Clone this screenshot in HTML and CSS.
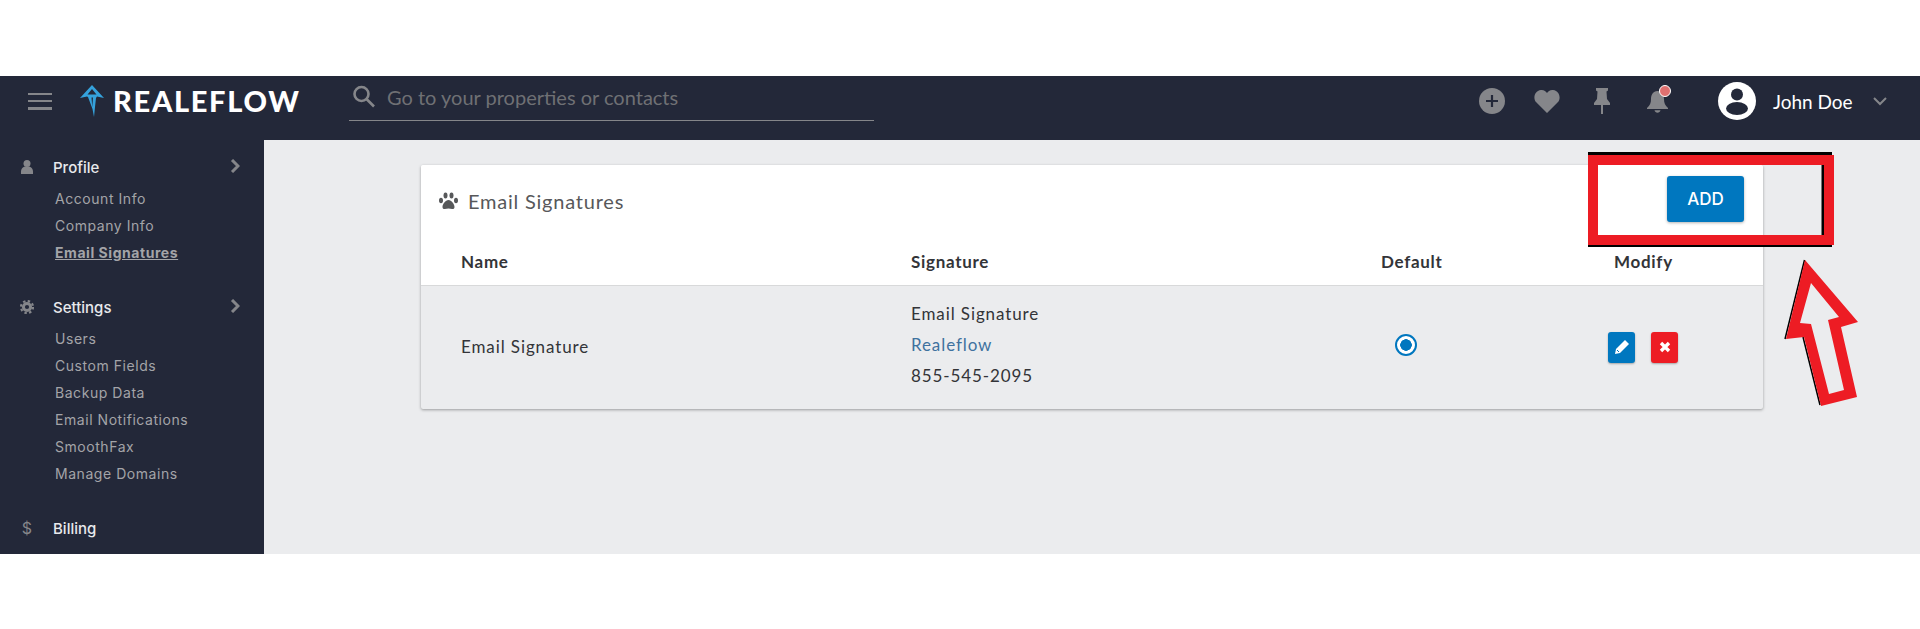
FILE: index.html
```html
<!DOCTYPE html>
<html lang="en">
  <head>
    <meta charset="UTF-8" />
    <title>Email Signatures</title>
    <link rel="stylesheet" href="styles.css">
  </head>
  <body>
    <div class="app">
      <header class="topbar">
        <button class="burger"><span></span><span></span><span></span></button>
        <div class="logo">
          <svg class="logo_mark" width="24" height="32" viewBox="0 0 24 32">
            <path d="M12 0L24 13L17 11.500L16 13L15 22L14 32L12.500 24L8 12L7 11.500L0 13Z" fill="#35a2dc" />
            <path d="M12 4L16.500 9.500H7.500Z" fill="#232839" />
            <path d="M11.500 12.500H13L12.300 22Z" fill="#232839" />
          </svg>
          <span class="logo_text">REALEFLOW</span>
        </div>
        <div class="search">
          <svg width="24" height="24" viewBox="0 0 24 24" fill="none" stroke="#85868a" stroke-width="2.6">
            <circle cx="9.500" cy="9" r="7" />
            <path d="M14.500 14L22 21.500" />
          </svg>
          <span class="search_text">Go to your properties or contacts</span>
        </div>
        <div class="top_icons">
          <svg class="t_plus" width="26" height="26" viewBox="0 0 26 26">
            <circle cx="13" cy="13" r="13" fill="#85868a" />
            <path d="M13 7V19M7 13H19" stroke="#232839" stroke-width="2.200" />
          </svg>
          <svg class="t_heart" width="26" height="24" viewBox="0 0 26 24">
            <path d="M13 24L2 13C-1 9.500 0 2 7 1C10 .7 12 2.500 13 4C14 2.500 16 .7 19 1C26 2 27 9.500 24 13Z" fill="#85868a" />
          </svg>
          <svg class="t_pin" width="16" height="26" viewBox="0 0 16 26">
            <path d="M2 0H14V2.500L12.500 3.500L13 11L16 15V17H9V26H7V17H0V15L3 11L3.500 3.500L2 2.500Z" fill="#85868a" />
          </svg>
          <div class="t_bell">
            <svg width="21" height="24" viewBox="0 0 21 24">
              <path d="M10.500 2C15 2 17 6 17 10C17 14 18 16 21 19V20H0V19C3 16 4 14 4 10C4 6 6 2 10.500 2Z M7.500 21.200H13.500C13 24.500 8 24.500 7.500 21.200Z" fill="#85868a" />
            </svg>
            <span class="bell_dot"></span>
          </div>
        </div>
        <div class="user">
          <svg width="38" height="38" viewBox="0 0 38 38">
            <circle cx="19" cy="19" r="19" fill="#fff" />
            <circle cx="19" cy="12.500" r="6" fill="#232839" />
            <ellipse cx="19" cy="26.500" rx="11" ry="6.500" fill="#232839" />
          </svg>
          <span class="user_name">John Doe</span>
          <svg width="14" height="9" viewBox="0 0 14 9" fill="none" stroke="#85868a" stroke-width="2">
            <path d="M1 1L7 7L13 1" />
          </svg>
        </div>
      </header>

      <div class="main">
        <nav class="sidebar">
          <div class="nav_group">
            <div class="nav_head">
              <svg class="nav_icon" width="14" height="14" viewBox="0 0 14 14">
                <circle cx="7" cy="3.500" r="3.500" fill="#85868a" />
                <path d="M1 14C.5 8 3 6.500 7 6.500S13.500 8 13 14Z" fill="#85868a" />
              </svg>
              <span class="nav_title">Profile</span>
              <svg class="nav_chev" width="10" height="14" viewBox="0 0 10 14" fill="none" stroke="#85868a" stroke-width="3">
                <path d="M2 1L8 7L2 13" />
              </svg>
            </div>
            <a class="nav_link">Account Info</a>
            <a class="nav_link">Company Info</a>
            <a class="nav_link nav_active">Email Signatures</a>
          </div>
          <div class="nav_group">
            <div class="nav_head">
              <svg class="nav_icon" width="14" height="14" viewBox="0 0 14 14" fill="none" stroke="#85868a">
                <circle cx="7" cy="7" r="3.600" stroke-width="3" />
                <circle cx="7" cy="7" r="6" stroke-width="2.200" stroke-dasharray="2.400 2.312" />
              </svg>
              <span class="nav_title">Settings</span>
              <svg class="nav_chev" width="10" height="14" viewBox="0 0 10 14" fill="none" stroke="#85868a" stroke-width="3">
                <path d="M2 1L8 7L2 13" />
              </svg>
            </div>
            <a class="nav_link">Users</a>
            <a class="nav_link">Custom Fields</a>
            <a class="nav_link">Backup Data</a>
            <a class="nav_link">Email Notifications</a>
            <a class="nav_link">SmoothFax</a>
            <a class="nav_link">Manage Domains</a>
          </div>
          <div class="nav_group">
            <div class="nav_head">
              <span class="nav_icon nav_dollar">$</span>
              <span class="nav_title">Billing</span>
            </div>
          </div>
        </nav>

        <section class="content">
          <div class="card">
            <div class="card_head">
              <svg class="paw" width="19" height="18" viewBox="0 0 19 18" fill="#57585a">
                <ellipse cx="6.500" cy="3.500" rx="2" ry="3" />
                <ellipse cx="12.500" cy="3.500" rx="2" ry="3" />
                <ellipse cx="2" cy="8.500" rx="2" ry="2.800" />
                <ellipse cx="17" cy="8.500" rx="2" ry="2.800" />
                <path d="M9.500 8C12.500 8 15.500 12 15.500 15C15.500 18 12 17 9.500 16.500C7 17 3.500 18 3.500 15C3.500 12 6.500 8 9.500 8Z" />
              </svg>
              <h2 class="card_title">Email Signatures</h2>
              <button class="add_button">ADD</button>
            </div>
            <div class="table_row table_head">
              <div>Name</div>
              <div>Signature</div>
              <div>Default</div>
              <div>Modify</div>
            </div>
            <div class="table_row table_body">
              <div class="row_name">Email Signature</div>
              <div class="sig">
                <div>Email Signature</div>
                <a class="sig_link">Realeflow</a>
                <div>855-545-2095</div>
              </div>
              <div><span class="radio"></span></div>
              <div class="actions">
                <button class="icon_btn edit_btn">
                  <svg width="14" height="14" viewBox="0 0 14 14">
                    <path d="M10 0L14 4L5 13L0 14L1 9Z" fill="#fff" />
                    <path d="M2 10L4 12" stroke="#0077bf" stroke-width="1" />
                  </svg>
                </button>
                <button class="icon_btn del_btn">
                  <svg width="12" height="12" viewBox="0 0 12 12">
                    <path d="M2 2L10 10M10 2L2 10" stroke="#fff" stroke-width="3.400" />
                  </svg>
                </button>
              </div>
            </div>
          </div>
        </section>
      </div>
    </div>

    <!-- red callout drawn on top of the screenshot -->
    <svg class="callout" width="1920" height="629" viewBox="0 0 1920 629">
      <path d="M1588 153.500H1832M1588 245.500H1832M1823 155V240" fill="none" stroke="#000" stroke-width="3" />
      <rect x="1593" y="160" width="236" height="80" fill="none" stroke="#ed1c24" stroke-width="10" />
      <path d="M1804.500 260L1785 339M1803 337L1820 405" fill="none" stroke="#000" stroke-width="1.500" />
      <path fill-rule="evenodd" fill="#ed1c24" d="M1805 260L1858 322L1841 327L1857 397L1821 406L1804 337L1786 339Z M1811 283L1800 323L1811 324L1829 394L1844 390L1828 320L1839 317Z" />
    </svg>
  </body>
</html>
```

FILE: styles.css
```css
body {
  margin: 0;
  padding-top: 76px;
  background-color: white;
  font-family: "Inter", sans-serif;
  height: 629px;
  box-sizing: border-box;
  overflow: hidden;
  position: relative;
}
.app {
  height: 478px;
  display: flex;
  flex-direction: column;
  background-color: #ebecee;
}
.topbar {
  height: 64px;
  box-sizing: border-box;
  padding-bottom: 14px;
  background-color: #232839;
  display: flex;
  align-items: center;
  flex-shrink: 0;
}
.burger {
  width: 24px;
  height: 17px;
  margin-left: 28px;
  padding: 0;
  border: 0;
  background: none;
  display: flex;
  flex-direction: column;
  justify-content: space-between;
}
.burger span {
  display: block;
  height: 2.5px;
  background-color: #85868a;
}
.logo {
  display: flex;
  align-items: center;
  margin-left: 28px;
  width: 269px;
}
.logo_text {
  margin-left: 9px;
  color: white;
  font-family: "Lato", sans-serif;
  font-weight: 900;
  font-size: 29px;
  letter-spacing: 1.7px;
  line-height: 32px;
}
.search {
  width: 525px;
  height: 36px;
  align-self: flex-start;
  margin-top: 9px;
  box-sizing: border-box;
  border-bottom: 1px solid #85868a;
  display: flex;
  align-items: flex-start;
  padding: 0 0 0 3px;
  gap: 11px;
}
.search_text {
  color: #6f7074;
  font-family: "Lato", sans-serif;
  font-size: 20px;
  line-height: 24px;
}
.top_icons {
  margin-left: 605px;
  display: flex;
  align-items: center;
}
.t_heart {
  margin-left: 29px;
}
.t_pin {
  margin-left: 34px;
}
.t_bell {
  margin-left: 37px;
  position: relative;
  height: 24px;
}
.bell_dot {
  position: absolute;
  top: -4px;
  left: 12px;
  width: 10px;
  height: 10px;
  border-radius: 50%;
  background-color: #e07070;
  border: 1.5px solid white;
}
.user {
  margin-left: 50px;
  display: flex;
  align-items: center;
}
.user_name {
  margin-left: 17px;
  margin-right: 20px;
  color: white;
  font-family: "Lato", sans-serif;
  font-size: 19px;
}
.main {
  flex: 1;
  display: flex;
  min-height: 0;
}
.sidebar {
  width: 264px;
  background-color: #232839;
  flex-shrink: 0;
  padding-top: 13px;
  box-sizing: border-box;
  overflow: hidden;
}
.nav_group {
  margin-bottom: 27px;
}
.nav_head {
  height: 28px;
  margin-bottom: 4px;
  display: flex;
  align-items: center;
  position: relative;
  padding-left: 20px;
}
.nav_icon {
  width: 14px;
  flex-shrink: 0;
}
.nav_dollar {
  color: #85868a;
  font-size: 16px;
  text-align: center;
}
.nav_title {
  margin-left: 19px;
  color: #e8e9ec;
  font-size: 15px;
  font-weight: 500;
}
.nav_chev {
  position: absolute;
  left: 230px;
  top: 6px;
}
.nav_link {
  display: block;
  height: 27px;
  line-height: 27px;
  margin-left: 55px;
  color: #a3a4a8;
  font-size: 14px;
  letter-spacing: 0.55px;
}
.nav_active {
  font-weight: 700;
  text-decoration: underline;
}
.content {
  flex: 1;
  padding: 25px 157px 0 157px;
}
.card {
  width: 1342px;
  box-shadow: 0 1px 3px rgba(0, 0, 0, 0.35);
  border-radius: 2px;
  background-color: #ebecee;
}
.card_head {
  height: 72px;
  background-color: white;
  display: flex;
  align-items: center;
  padding-left: 18px;
  border-radius: 2px 2px 0 0;
}
.paw {
  flex-shrink: 0;
}
.card_title {
  margin: 0 0 0 10px;
  font-family: "Lato", sans-serif;
  font-weight: 400;
  font-size: 20px;
  color: #57585a;
  letter-spacing: 0.78px;
}
.add_button {
  margin-left: auto;
  margin-right: 19px;
  margin-bottom: 4px;
  width: 77px;
  height: 46px;
  border: 0;
  border-radius: 3px;
  background-color: #0077bf;
  color: white;
  font-family: "Inter", sans-serif;
  font-size: 17px;
  font-weight: 500;
  box-shadow: 0 1px 3px rgba(0, 0, 0, 0.3);
}
.table_row {
  display: grid;
  grid-template-columns: 450px 470px 233px 1fr;
  padding-left: 40px;
  font-family: "Lato", sans-serif;
  font-size: 17px;
  color: #333438;
  letter-spacing: 0.9px;
}
.table_head {
  height: 49px;
  background-color: white;
  font-weight: 700;
  letter-spacing: 0.7px;
  align-items: center;
  border-bottom: 1px solid #d8d9da;
  box-sizing: border-box;
}
.table_body {
  height: 123px;
  align-items: center;
}
.row_name {
  margin-bottom: 2px;
}
.sig {
  line-height: 31px;
  margin-bottom: 6px;
}
.sig_link {
  color: #3f729f;
  display: block;
}
.radio {
  display: block;
  width: 22px;
  height: 22px;
  margin-left: 14px;
  margin-bottom: 5px;
  box-sizing: border-box;
  border: 2px solid #0077bf;
  border-radius: 50%;
  background: radial-gradient(circle, #0077bf 5.5px, white 6px);
}
.actions {
  display: flex;
  gap: 16px;
  margin-left: -6px;
  margin-bottom: 1px;
}
.icon_btn {
  width: 27px;
  height: 31px;
  padding: 0;
  border: 0;
  border-radius: 3px;
  display: flex;
  align-items: center;
  justify-content: center;
  box-shadow: 0 1px 2px rgba(0, 0, 0, 0.3);
}
.edit_btn {
  background-color: #0077bf;
}
.del_btn {
  background-color: #ed1c24;
}
.callout {
  position: absolute;
  top: 0;
  left: 0;
  pointer-events: none;
}
```
